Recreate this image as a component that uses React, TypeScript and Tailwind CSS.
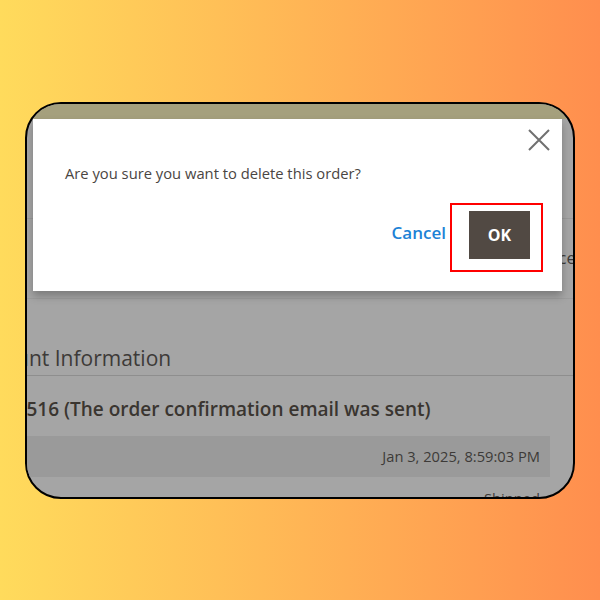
export default function App() {
  return (
    <div
      className="w-[600px] h-[600px] flex items-center justify-center bg-gradient-to-r from-[#ffdb5c] to-[#ff8e4e]"
      style={{ fontFamily: '"Open Sans", "Liberation Sans", sans-serif' }}
    >
      <div className="relative w-[550px] h-[397px] rounded-[36px] border-2 border-black overflow-hidden bg-[#a5a5a5]">
        {/* page behind the overlay */}
        <div className="flex flex-col text-[#3a3530]">
          <div className="h-[15px] bg-[#a5a07d]" />
          <div className="h-[99px]" />
          <div className="h-px bg-[#999999]" />
          <div className="h-[79px] flex items-center justify-end">
            <span className="text-[17px] -mr-[3px] text-[#3d3a38]">Invoice</span>
          </div>
          <div className="h-px bg-[#9c9c9c]" />
          <div className="h-[44px]" />
          <div className="-ml-[57px] text-[21px] leading-[30px] text-[#3d3a38] whitespace-nowrap">
            Account Information
          </div>
          <div className="mt-[2px] h-px bg-[#8e8e8e]" />
          <div className="mt-[20px] -ml-[142px] text-[19px] leading-[26px] font-semibold text-[#3a3530] whitespace-nowrap">
            Order # 000000516 (The order confirmation email was sent)
          </div>
          <div className="mt-[14px] mr-[23px] h-[41px] bg-[#9a9a9a] flex items-center justify-end pr-[10px] text-[14.7px] text-[#3d3a38]">
            Jan 3, 2025, 8:59:03 PM
          </div>
          <div className="mt-[10px] mr-[33px] flex justify-end text-[14.7px] text-[#3d3a38]">Shipped</div>
        </div>

        {/* modal */}
        <div className="absolute left-[6px] top-[15px] w-[529px] h-[172px] bg-white shadow-[0_5px_8px_rgba(0,0,0,0.25)]">
          <button className="absolute left-[495px] top-[10px] w-[22px] h-[22px] flex items-center justify-center">
            <svg width="22" height="22" viewBox="0 0 22 22" fill="none" stroke="#707070" strokeWidth="2">
              <path d="M1 1 L21 21 M21 1 L1 21" />
            </svg>
          </button>
          <p className="absolute left-[32px] top-[44px] text-[14.75px] leading-[20px] text-[#4a4542] whitespace-nowrap">
            Are you sure you want to delete this order?
          </p>
          <div className="absolute right-[32px] top-[92px] flex items-center gap-[23px]">
            <span className="text-[17px] font-semibold text-[#1c82d6] -mt-[3px]">Cancel</span>
            <span className="w-[61px] h-[48px] bg-[#514943] text-white text-[16px] font-bold flex items-center justify-center">
              OK
            </span>
          </div>
          <div className="absolute left-[417px] top-[84px] w-[93px] h-[69px] border-2 border-[#ff0000]" />
        </div>
      </div>
    </div>
  );
}
